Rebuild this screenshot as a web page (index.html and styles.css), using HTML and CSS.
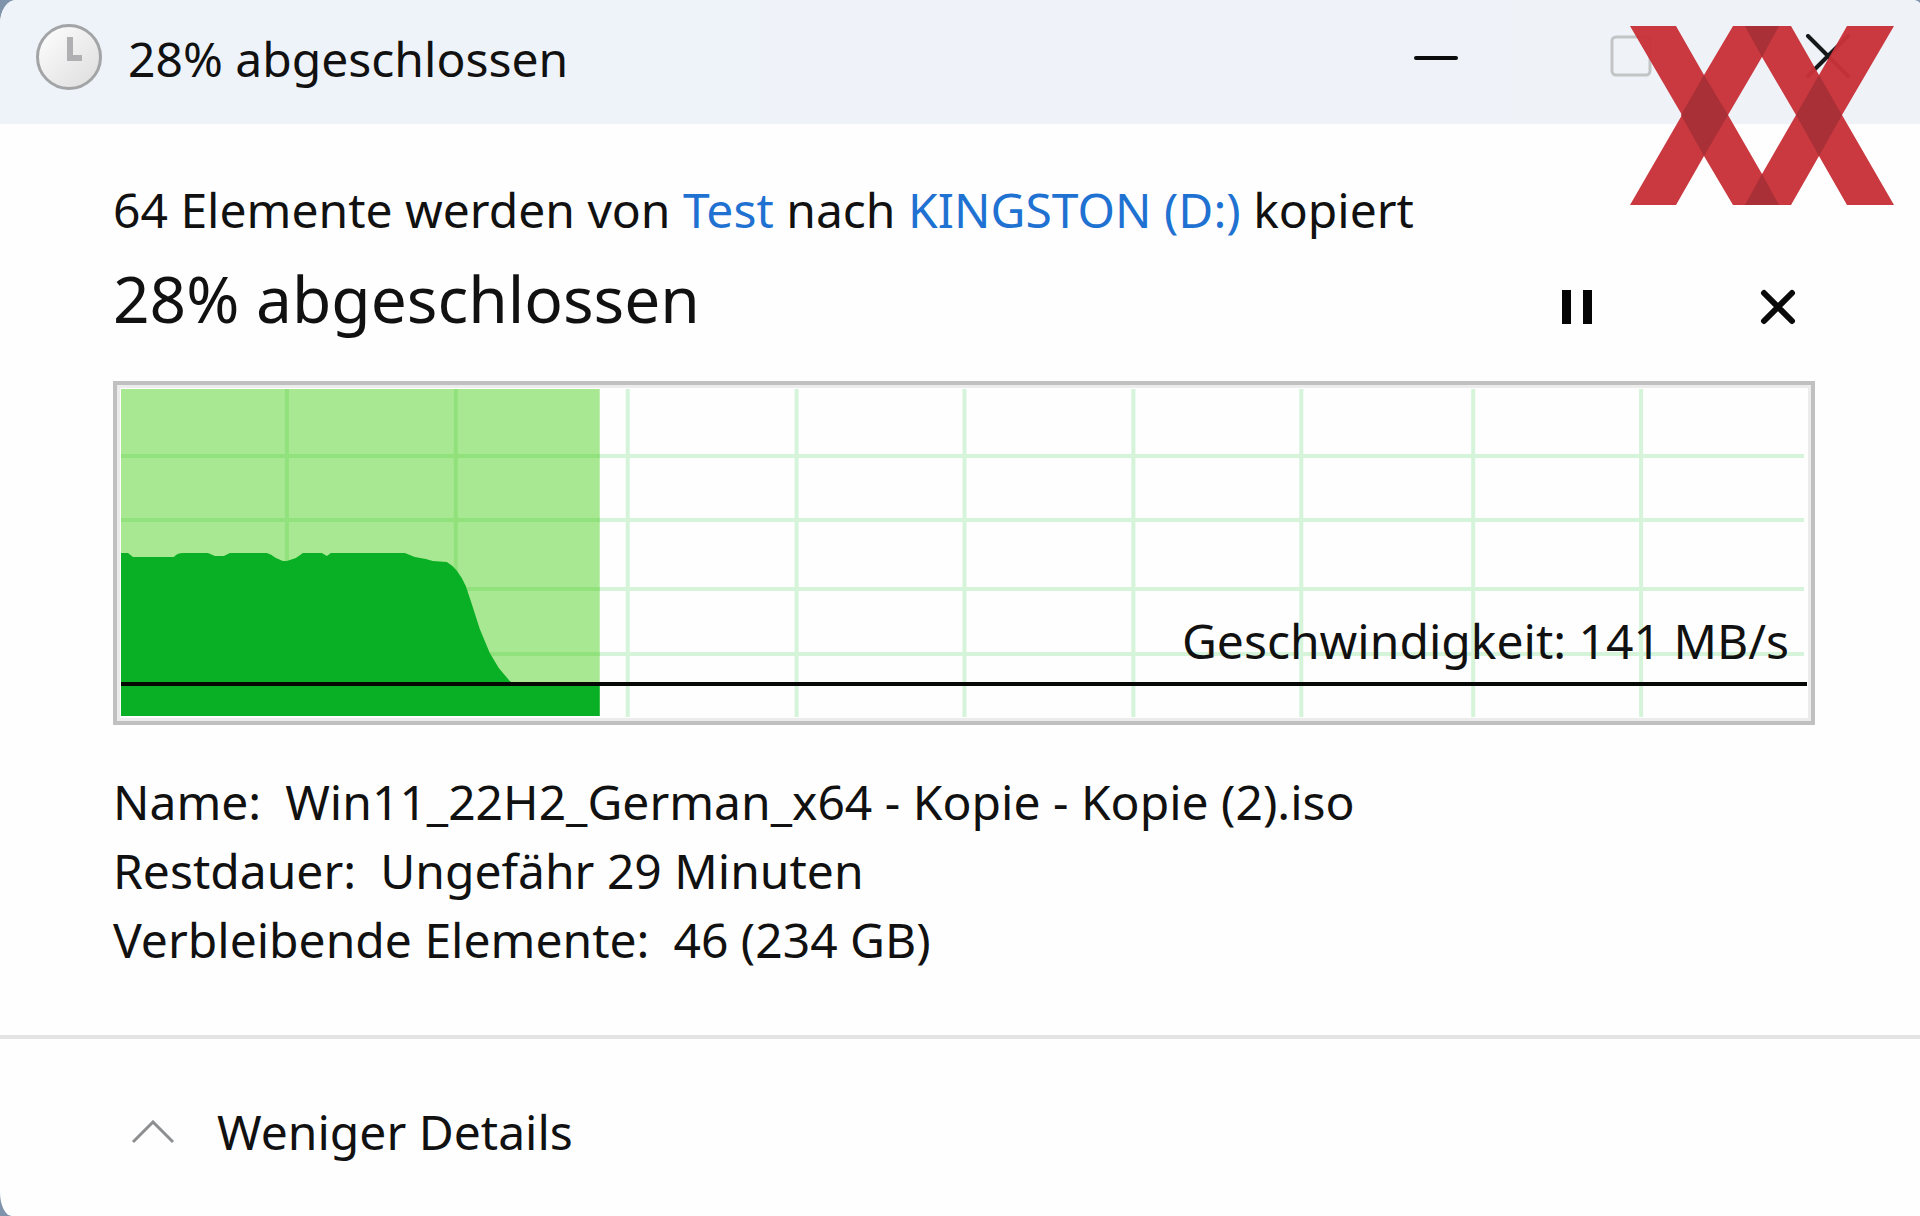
FILE: index.html
```
<!DOCTYPE html>
<html lang="de">
<head>
<meta charset="utf-8">
<meta name="viewport" content="width=device-width, initial-scale=1">
<title>28% abgeschlossen</title>
<link rel="stylesheet" href="styles.css">
</head>
<body>
<div class="window">
  <header class="titlebar">
    <svg class="clock" viewBox="0 0 66 66" aria-hidden="true">
      <defs>
        <linearGradient id="face" x1="0" y1="0" x2="1" y2="1">
          <stop offset="0" stop-color="#ffffff"/>
          <stop offset="1" stop-color="#dcdcdc"/>
        </linearGradient>
      </defs>
      <circle cx="33" cy="33" r="31.5" fill="url(#face)" stroke="#a2a4a6" stroke-width="3"/>
      <path d="M34 13V34H46" fill="none" stroke="#b0b0b2" stroke-width="6"/>
    </svg>
    <h1 class="title">28% abgeschlossen</h1>
    <div class="controls">
      <button class="control" type="button" aria-label="Minimieren">
        <svg viewBox="0 0 46 46"><path d="M3 24H43" stroke="#0b0b0b" stroke-width="4" stroke-linecap="round"/></svg>
      </button>
      <button class="control" type="button" aria-label="Maximieren" disabled>
        <svg viewBox="0 0 46 46"><rect x="3" y="3" width="38" height="38" rx="4" fill="none" stroke="#c3c4c6" stroke-width="3"/></svg>
      </button>
      <button class="control" type="button" aria-label="Schließen">
        <svg viewBox="0 0 46 46"><path d="M3 2L43 42M43 2L3 42" stroke="#16181a" stroke-width="4" stroke-linecap="round"/></svg>
      </button>
    </div>
  </header>

  <main class="content">
    <p class="summary">64 Elemente werden von <a href="#test">Test</a> nach <a href="#kingston">KINGSTON (D:)</a> kopiert</p>
    <div class="status">
      <h2 class="percent">28% abgeschlossen</h2>
      <div class="actions">
        <button class="action" type="button" aria-label="Anhalten">
          <svg viewBox="0 0 36 36"><path d="M3 1h9v34h-9zM24 1h9v34h-9z" fill="#050505"/></svg>
        </button>
        <button class="action" type="button" aria-label="Abbrechen">
          <svg viewBox="0 0 36 36"><path d="M4 4L32 32M32 4L4 32" stroke="#0a0a0a" stroke-width="6" stroke-linecap="round"/></svg>
        </button>
      </div>
    </div>

    <div class="chart">
      <svg class="plot" viewBox="0 0 1703 344" preserveAspectRatio="none" aria-hidden="true">
        <path d="M515 8V336M684 8V336M852 8V336M1021 8V336M1189 8V336M1361 8V336M1529 8V336M487 75H1692M487 139H1692M487 208H1692M487 273H1692" stroke="#d5f4da" stroke-width="4"/>
        <rect x="8" y="8" width="479" height="327" fill="#a8e892"/>
        <path d="M174 8V300M343 8V300M8 75H487M8 139H487M8 208H487M8 273H487" stroke="#91e17c" stroke-width="4"/>
        <path d="M8 172H15L20 176H61Q64 172 70 172H95L102 175H111L117 172H154Q158 173 163 177L170 180H174L183 177L190 172H209L214 175L218 172H292L302 176L313 178L320 180L334 181Q345 187 353 205L359 223L367 248L377 272L386 287L397 300Q400 303 404 303H487V335H8Z" fill="#09b025"/>
        <path d="M8 303H1695" stroke="#050805" stroke-width="4"/>
      </svg>
      <p class="speed">Geschwindigkeit: 141 MB/s</p>
    </div>

    <dl class="details">
      <div class="row"><dt>Name:</dt><dd>Win11_22H2_German_x64 - Kopie - Kopie (2).iso</dd></div>
      <div class="row"><dt>Restdauer:</dt><dd>Ungefähr 29 Minuten</dd></div>
      <div class="row"><dt>Verbleibende Elemente:</dt><dd>46 (234 GB)</dd></div>
    </dl>
  </main>

  <footer class="footer">
    <button class="toggle" type="button">
      <svg viewBox="0 0 44 24" aria-hidden="true"><path d="M2 22L22 2L42 22" fill="none" stroke="#8c8e90" stroke-width="3"/></svg>
      Weniger Details
    </button>
  </footer>

  <svg class="logo" viewBox="0 0 264 179" aria-hidden="true">
    <path d="M0 0H46L74 49L103 0H161L189 49L217 0H264L212 89L264 179H217L189 130L161 179H103L74 130L46 179H0L52 89ZM132 31L98 89L132 148L166 89Z" fill="#c8323a" fill-rule="evenodd" opacity=".97"/>
    <path d="M74 49L98 89L74 130L51 89ZM189 49L212 89L189 130L166 89ZM115 0H149L132 31ZM115 179H149L132 148Z" fill="#a93036"/>
  </svg>
</div>
</body>
</html>
```
FILE: styles.css
```
* {
  box-sizing: border-box;
}

body {
  margin: 0;
  background: #7f93aa;
  color: #111;
  font: 48px/68px "Noto Sans", "Open Sans", sans-serif;
}

h1, h2, p, dl, dd {
  margin: 0;
  font-weight: 400;
}

button {
  padding: 0;
  border: 0;
  background: none;
  color: inherit;
  font: inherit;
}

a {
  color: #1f72d2;
  text-decoration: none;
}

.window {
  position: relative;
  display: flex;
  flex-direction: column;
  min-height: 100vh;
  overflow: hidden;
  border-radius: 16px 8px 0 12px / 24px 4px 0 24px;
  background: #fefefe;
}

.titlebar {
  display: flex;
  align-items: center;
  height: 124px;
  padding: 0 2px 10px 36px;
  background: linear-gradient(90deg, #eef3fa, #eff3f8);
}

.clock {
  width: 66px;
  height: 66px;
}

.title {
  margin-left: 26px;
  padding-top: 4px;
  font-size: 48px;
}

.controls {
  display: flex;
  gap: 16px;
  margin-left: auto;
}

.control {
  display: grid;
  place-items: center;
  width: 180px;
  height: 92px;
}

.control svg {
  width: 46px;
  height: 46px;
}

.content {
  padding: 52px 105px 61px 113px;
}

.status {
  display: flex;
  align-items: flex-end;
  justify-content: space-between;
  margin: 15px 0 42px;
}

.percent {
  font-size: 64px;
  line-height: 80px;
}

.actions {
  display: flex;
  gap: 137px;
  padding-right: 5px;
}

.action {
  display: grid;
  place-items: center;
  width: 64px;
  height: 64px;
}

.action svg {
  width: 36px;
  height: 36px;
}

.chart {
  position: relative;
  height: 344px;
  outline: 4px solid #c0c0c0;
  outline-offset: -4px;
  box-shadow: inset 0 0 0 7px #ececec;
}

.plot {
  display: block;
  width: 100%;
  height: 100%;
}

.speed {
  position: absolute;
  right: 26px;
  bottom: 50px;
}

.details {
  margin-top: 42px;
  line-height: 69px;
}

.row {
  display: flex;
  gap: 24px;
}

.footer {
  flex: 1;
  padding: 59px 131px 40px;
  border-top: 4px solid #e4e4e4;
}

.toggle {
  display: flex;
  align-items: center;
  gap: 42px;
}

.toggle svg {
  width: 44px;
  height: 24px;
}

.logo {
  position: absolute;
  top: 26px;
  right: 26px;
  width: 264px;
  height: 179px;
}
```
